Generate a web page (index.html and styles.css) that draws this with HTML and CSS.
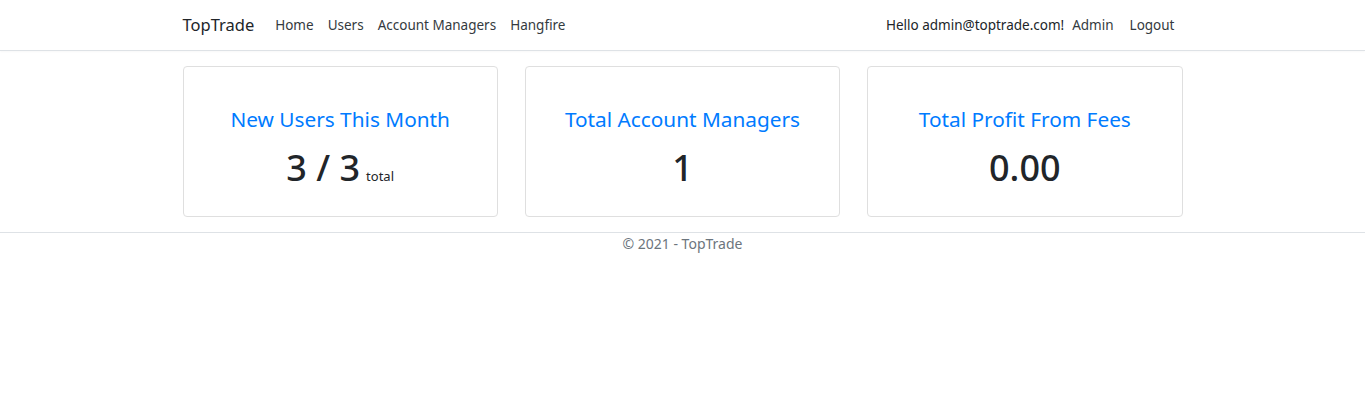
FILE: index.html
```html
<!DOCTYPE html>
<html>
<head>
<meta charset="utf-8">
<link rel="stylesheet" href="styles.css">
</head>
<body>
<header class="topbar">
  <nav class="container nav">
    <a class="brand" href="#">TopTrade</a>
    <ul class="links">
      <li><a href="#">Home</a></li>
      <li><a href="#">Users</a></li>
      <li><a href="#">Account Managers</a></li>
      <li><a href="#">Hangfire</a></li>
    </ul>
    <ul class="links right">
      <li><span class="hello">Hello admin@toptrade.com!</span></li>
      <li><a href="#">Admin</a></li>
      <li><a href="#" class="logout">Logout</a></li>
    </ul>
  </nav>
</header>
<main class="container cards">
  <div class="card">
    <h3 class="card-title">New Users This Month</h3>
    <div class="value">3 / 3<small class="sub">total</small></div>
  </div>
  <div class="card">
    <h3 class="card-title">Total Account Managers</h3>
    <div class="value">1</div>
  </div>
  <div class="card">
    <h3 class="card-title">Total Profit From Fees</h3>
    <div class="value">0.00</div>
  </div>
</main>
<footer class="footer">
  <div class="container foot-text">© 2021 - TopTrade</div>
</footer>
</body>
</html>
```
FILE: styles.css
```css
html { font-size: 14px; }
body {
  margin: 0;
  font-family: "Noto Sans", "Open Sans", sans-serif;
  color: #212529;
  background: #fff;
}
a { text-decoration: none; }
.container {
  width: 1000px;
  margin: 0 auto;
}
.topbar {
  border-bottom: 1px solid #dee2e6;
  box-shadow: 0 1px 2px rgba(0,0,0,0.03);
}
.nav {
  display: flex;
  align-items: center;
  height: 50px;
  padding-bottom: 1px;
  box-sizing: border-box;
}
.brand {
  font-size: 16.5px;
  color: #212529;
  margin-right: 14px;
}
.links {
  list-style: none;
  margin: 0;
  padding: 0;
  display: flex;
  align-items: center;
}
.links a {
  color: #343a40;
  font-size: 13.5px;
  padding: 8px 7px;
  display: block;
}
.links.right { margin-left: auto; }
.hello { font-size: 13.5px; color: #212529; margin-right: 1px; }
.links a.logout { padding-left: 9px; padding-right: 8px; }
.cards {
  display: grid;
  grid-template-columns: repeat(3, 1fr);
  gap: 27px;
  padding-top: 15px;
  padding-bottom: 15px;
}
.card {
  border: 1px solid #dfdfdf;
  border-radius: 4px;
  text-align: center;
  display: flex;
  flex-direction: column;
  align-items: center;
  padding-top: 40px;
  box-sizing: border-box;
  height: 151px;
}
.card-title {
  margin: 0;
  font-size: 20.8px;
  font-weight: 400;
  color: #007bff;
  line-height: 1.2;
}
.value {
  margin-top: 14px;
  font-size: 36px;
  line-height: 1.2;
  font-weight: 500;
  color: #212529;
}
.sub { font-size: 13px; font-weight: 400; margin-left: 6px; }
.footer {
  border-top: 1px solid #dee2e6;
}
.foot-text {
  text-align: center;
  color: #6c757d;
  font-size: 14px;
  padding-top: 1px;
}
```
